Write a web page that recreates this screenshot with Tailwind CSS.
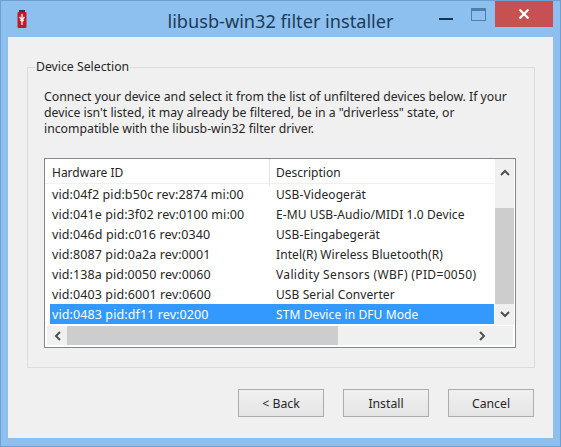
<!DOCTYPE html>
<html lang="en">
<head>
    <meta charset="UTF-8">
    <title>libusb-win32 filter installer</title>
    <script src="https://cdn.jsdelivr.net/npm/@tailwindcss/browser@4"></script>
</head>
<body class="m-0 overflow-hidden bg-white">
    <div class="w-[561px] h-[447px] flex flex-col bg-[#8ec0ef] border border-[#6d9fd0] font-['Noto_Sans',sans-serif] text-[12.25px] text-[#262626]">
        <!-- title bar -->
        <div class="h-[36px] shrink-0 grid grid-cols-[1fr_auto_1fr]">
            <div class="pl-[16px] pt-[9px]">
                <svg width="10" height="19" viewBox="0 0 10 19">
                    <rect x="2" y="0" width="6" height="3" fill="#2b3a4a"/>
                    <rect x="0.5" y="2" width="9" height="16" rx="1" fill="#c11b2a"/>
                    <path d="M5 4v11M2.5 7l2.5 3 2.5-3M3 10.5h4" stroke="#f4e6e6" stroke-width="1.4" fill="none"/>
                </svg>
            </div>
            <div class="pt-[7px] text-[18.15px] leading-[26px] text-[#1d3b57]">libusb-win32 filter installer</div>
            <div class="flex justify-end items-start pr-[7px]">
                <div class="w-[14px] h-[2px] mt-[17px] bg-[#14344f]"></div>
                <div class="w-[15px] h-[13px] mt-[7px] ml-[18px] border border-[#4f7fa8] border-t-[3px]"></div>
                <div class="w-[58px] h-[26px] ml-[9px] bg-[#c75050] flex items-center justify-center">
                    <svg width="12" height="10" viewBox="0 0 12 10"><path d="M1.5 0.5l9 9M10.5 0.5l-9 9" stroke="#fff" stroke-width="2.2"/></svg>
                </div>
            </div>
        </div>

        <!-- dialog body -->
        <div class="w-[545px] h-[401px] ml-[7px] bg-[#f0f0f0] pl-[19px] pt-[30px]">
            <div class="w-[508px] h-[301px] border border-[#dcdcdc] pl-[16px]">
                <div class="w-fit -mt-[9px] -ml-[9px] px-[1px] leading-[16px] bg-[#f0f0f0]">Device Selection</div>
                <p class="pt-[14px] w-[470px] leading-[16px] whitespace-nowrap">
                    Connect your device and select it from the list of unfiltered devices below. If your<br>
                    device isn't listed, it may already be filtered, be in a "driverless" state, or<br>
                    incompatible with the libusb-win32 filter driver.
                </p>

                <!-- device list -->
                <div class="mt-[21px] w-[472px] h-[190px] border border-[#828790] bg-white grid grid-cols-[450px_20px] grid-rows-[166px_22px]">
                    <div>
                        <div class="h-[25px] grid grid-cols-[225px_1fr] border-b border-[#f0f0f0] leading-[27px] text-[12px]">
                            <div class="pl-[7px] border-r border-[#e5e5e5]">Hardware ID</div>
                            <div class="pl-[6px]">Description</div>
                        </div>
                        <div class="pl-[5px] pr-[1px] text-[12.5px] tracking-[0.1px]">
                            <div class="h-[20px] grid grid-cols-[226px_1fr] leading-[22px]"><span class="pl-[2px]">vid:04f2 pid:b50c rev:2874 mi:00</span><span class="text-[12px]">USB-Videogerät</span></div>
                            <div class="h-[20px] grid grid-cols-[226px_1fr] leading-[22px]"><span class="pl-[2px]">vid:041e pid:3f02 rev:0100 mi:00</span><span class="text-[12px]">E-MU USB-Audio/MIDI 1.0 Device</span></div>
                            <div class="h-[20px] grid grid-cols-[226px_1fr] leading-[22px]"><span class="pl-[2px]">vid:046d pid:c016 rev:0340</span><span class="text-[12px]">USB-Eingabegerät</span></div>
                            <div class="h-[20px] grid grid-cols-[226px_1fr] leading-[22px]"><span class="pl-[2px]">vid:8087 pid:0a2a rev:0001</span><span class="text-[12px]">Intel(R) Wireless Bluetooth(R)</span></div>
                            <div class="h-[20px] grid grid-cols-[226px_1fr] leading-[22px]"><span class="pl-[2px]">vid:138a pid:0050 rev:0060</span><span class="text-[12px] tracking-[0.35px]">Validity Sensors (WBF) (PID=0050)</span></div>
                            <div class="h-[20px] grid grid-cols-[226px_1fr] leading-[22px]"><span class="pl-[2px]">vid:0403 pid:6001 rev:0600</span><span class="text-[12px]">USB Serial Converter</span></div>
                            <div class="h-[20px] grid grid-cols-[226px_1fr] leading-[22px] bg-[#3399ff] text-white"><span class="pl-[2px]">vid:0483 pid:df11 rev:0200</span><span class="text-[12px]">STM Device in DFU Mode</span></div>
                        </div>
                    </div>

                    <!-- vertical scrollbar -->
                    <div class="bg-[#f0f0f0] flex flex-col w-[19px]">
                        <div class="h-[25px] flex items-center justify-center pt-[1px]">
                            <svg width="10" height="7" viewBox="0 0 10 7"><path d="M1 6l4-4 4 4" stroke="#505050" stroke-width="2" fill="none"/></svg>
                        </div>
                        <div class="h-[24px]"></div>
                        <div class="h-[96px] bg-[#cdcdcd]"></div>
                        <div class="h-[21px] flex items-center justify-center">
                            <svg width="10" height="7" viewBox="0 0 10 7"><path d="M1 1l4 4 4-4" stroke="#505050" stroke-width="2" fill="none"/></svg>
                        </div>
                    </div>

                    <!-- horizontal scrollbar -->
                    <div class="col-span-2 h-[19px] mt-[1px] ml-[2px] mr-[2px] bg-[#f0f0f0] flex">
                        <div class="w-[20px] flex items-center justify-center">
                            <svg width="7" height="10" viewBox="0 0 7 10"><path d="M6 1L2 5l4 4" stroke="#505050" stroke-width="2" fill="none"/></svg>
                        </div>
                        <div class="w-[271px] bg-[#cdcdcd]"></div>
                        <div class="w-[134px]"></div>
                        <div class="w-[21px] flex items-center justify-center">
                            <svg width="7" height="10" viewBox="0 0 7 10"><path d="M1 1l4 4-4 4" stroke="#505050" stroke-width="2" fill="none"/></svg>
                        </div>
                    </div>
                </div>
            </div>

            <!-- buttons -->
            <div class="mt-[21px] ml-[211px] flex gap-[19px]">
                <button class="w-[86px] h-[28px] pt-[2px] border border-[#acacac] bg-gradient-to-b from-[#f0f0f0] to-[#e5e5e5]">&lt; Back</button>
                <button class="w-[86px] h-[28px] pt-[2px] border border-[#acacac] bg-gradient-to-b from-[#f0f0f0] to-[#e5e5e5]">Install</button>
                <button class="w-[86px] h-[28px] pt-[2px] border border-[#acacac] bg-gradient-to-b from-[#f0f0f0] to-[#e5e5e5]">Cancel</button>
            </div>
        </div>
    </div>
</body>
</html>
